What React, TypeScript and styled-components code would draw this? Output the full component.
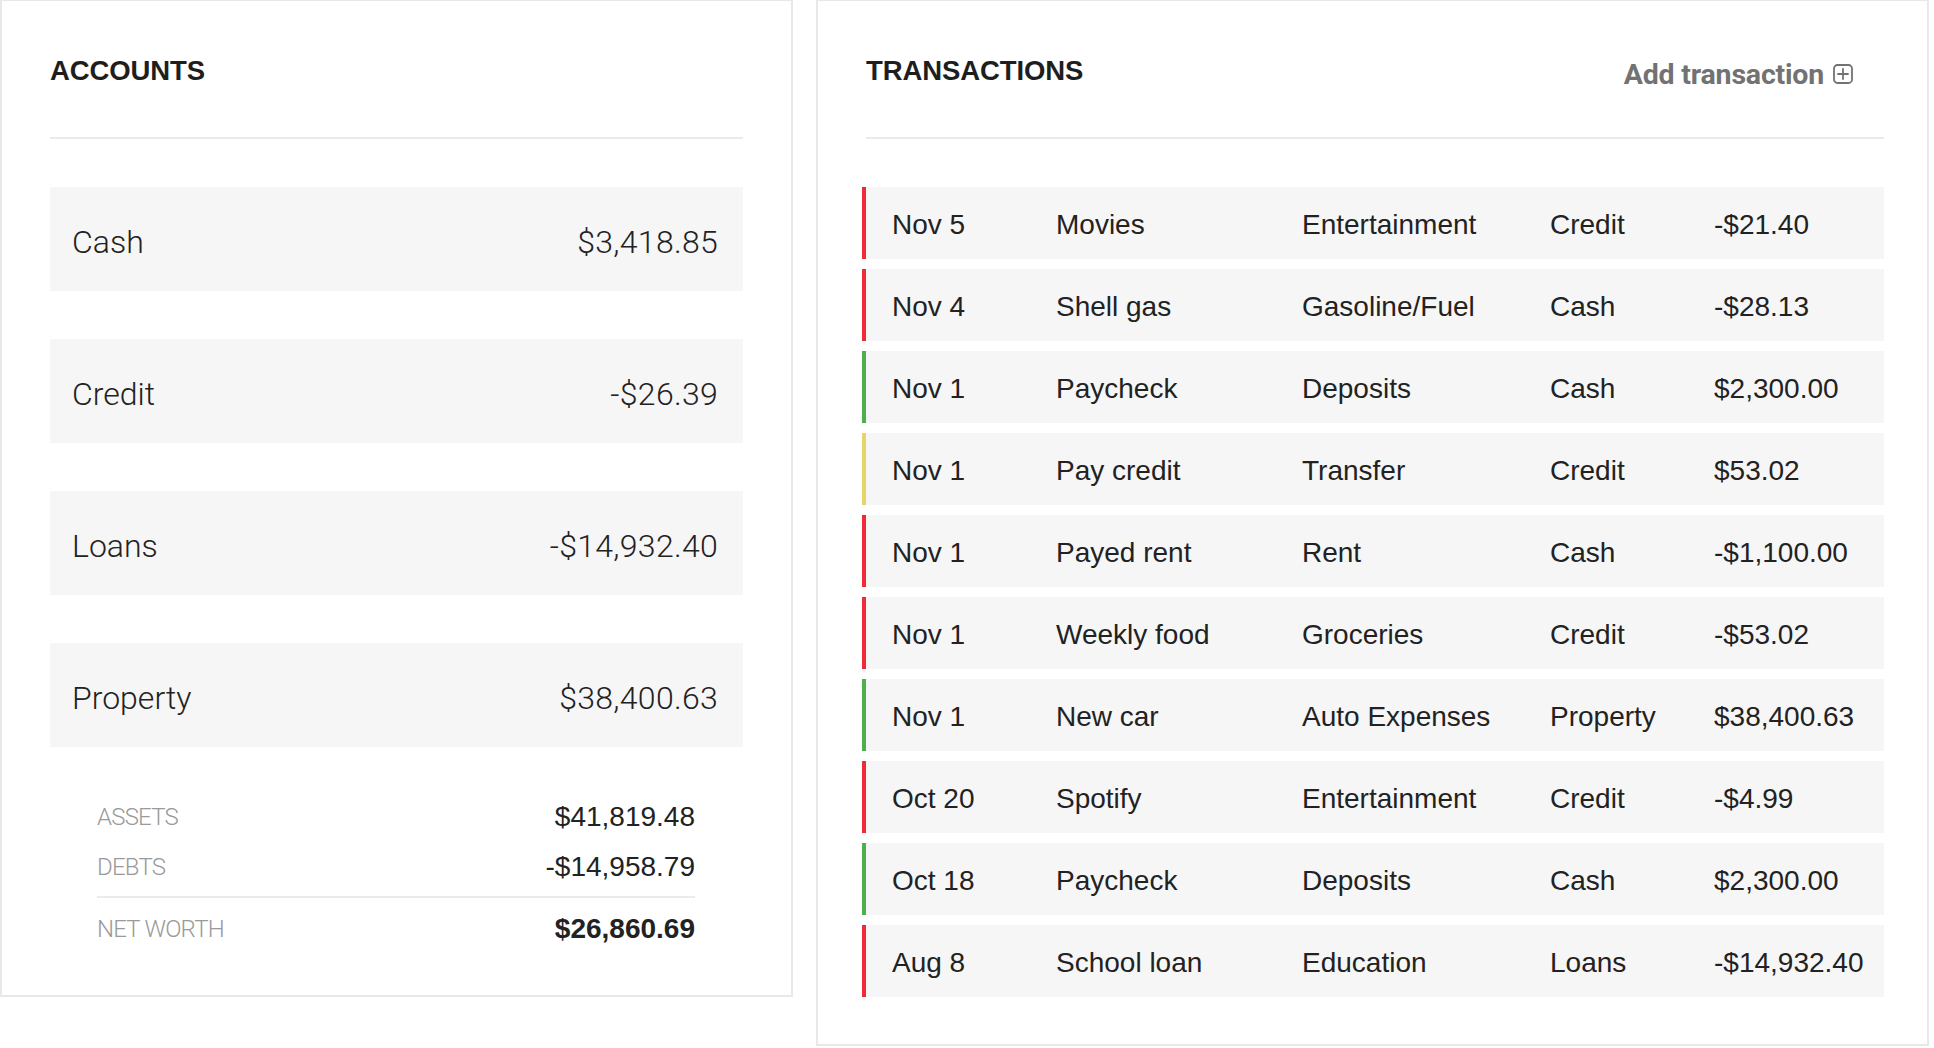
import React from "react";
import styled, { createGlobalStyle } from "styled-components";

const GlobalStyle = createGlobalStyle`
  html, body {
    margin: 0;
    padding: 0;
    background: #ffffff;
  }
  body {
    font-family: "Liberation Sans", Arial, sans-serif;
    color: #222222;
  }
  * { box-sizing: border-box; }
`;

const Page = styled.div`
  display: flex;
  align-items: flex-start;
  gap: 23px;
`;

const Card = styled.section<{ $width: number }>`
  width: ${(p) => p.$width}px;
  background: #ffffff;
  border: 2px solid #e8e8e8;
  border-top-width: 1.5px;
`;

const AccountsCard = styled(Card)`
  padding: 0 48px 42px 48px;
`;

const TransactionsCard = styled(Card)`
  padding: 0 43px 47px 48px;
`;

const Header = styled.header`
  height: 138px;
  display: flex;
  align-items: center;
  justify-content: space-between;
  padding-top: 4px;
  border-bottom: 2px solid #ebebeb;
`;

const Title = styled.h2`
  margin: 0;
  font-family: "Liberation Sans", Arial, sans-serif;
  font-weight: 700;
  font-size: 27.5px;
  letter-spacing: -0.1px;
  color: #1e1e1e;
`;

const AddButton = styled.button`
  display: flex;
  align-items: center;
  gap: 9px;
  margin: 6px 31px 0 0;
  padding: 0;
  border: none;
  background: none;
  cursor: pointer;
  font-family: Roboto, "Liberation Sans", sans-serif;
  font-weight: 700;
  font-size: 28.5px;
  letter-spacing: -0.2px;
  color: #727272;
`;

const AccountList = styled.div`
  display: flex;
  flex-direction: column;
  gap: 48px;
  margin-top: 48px;
`;

const AccountRow = styled.div`
  height: 104px;
  display: flex;
  align-items: center;
  justify-content: space-between;
  padding: 5px 25px 0 22px;
  background: #f6f6f6;
  font-family: Roboto, "Liberation Sans", sans-serif;
  font-weight: 300;
  font-size: 32px;
  color: #222222;
`;

const AccountValue = styled.span`
  letter-spacing: 0.3px;
`;

const Summary = styled.div`
  margin-top: 44px;
  padding: 0 48px 0 47px;
`;

const SummaryRow = styled.div<{ $strong?: boolean }>`
  height: 50px;
  display: flex;
  align-items: center;
  justify-content: space-between;
  padding-top: 2px;
  font-family: "Liberation Sans", Arial, sans-serif;
  font-size: 28px;
  font-weight: ${(p) => (p.$strong ? 700 : 400)};
  color: #222222;
`;

const SummaryLabel = styled.span`
  font-family: Roboto, "Liberation Sans", sans-serif;
  font-weight: 300;
  font-size: 24px;
  letter-spacing: -0.8px;
  color: #9a9a9a;
`;

const SummaryDivider = styled.hr`
  margin: 5px 0;
  border: none;
  border-top: 2px solid #ebebeb;
`;

const TxList = styled.div`
  display: flex;
  flex-direction: column;
  gap: 10px;
  margin: 48px 0 0 -4px;
`;

const TxRow = styled.div<{ $color: string }>`
  height: 72px;
  display: grid;
  grid-template-columns: 164px 246px 248px 164px 1fr;
  align-items: center;
  padding: 4px 0 0 26px;
  background: #f6f6f6;
  border-left: 4px solid ${(p) => p.$color};
  font-family: "Liberation Sans", Arial, sans-serif;
  font-size: 28px;
  color: #222222;
`;

const PlusIcon = () => (
  <svg width="20" height="20" viewBox="0 0 20 20" fill="none" stroke="#727272" strokeWidth="1.8">
    <rect x="1" y="1" width="18" height="18" rx="3.5" />
    <line x1="10" y1="5" x2="10" y2="15" strokeLinecap="round" />
    <line x1="5" y1="10" x2="15" y2="10" strokeLinecap="round" />
  </svg>
);

const RED = "#ef2b37";
const GREEN = "#4cb050";
const YELLOW = "#e8d468";

const accounts = [
  { name: "Cash", value: "$3,418.85" },
  { name: "Credit", value: "-$26.39" },
  { name: "Loans", value: "-$14,932.40" },
  { name: "Property", value: "$38,400.63" },
];

const transactions = [
  { date: "Nov 5", desc: "Movies", cat: "Entertainment", acct: "Credit", amount: "-$21.40", color: RED },
  { date: "Nov 4", desc: "Shell gas", cat: "Gasoline/Fuel", acct: "Cash", amount: "-$28.13", color: RED },
  { date: "Nov 1", desc: "Paycheck", cat: "Deposits", acct: "Cash", amount: "$2,300.00", color: GREEN },
  { date: "Nov 1", desc: "Pay credit", cat: "Transfer", acct: "Credit", amount: "$53.02", color: YELLOW },
  { date: "Nov 1", desc: "Payed rent", cat: "Rent", acct: "Cash", amount: "-$1,100.00", color: RED },
  { date: "Nov 1", desc: "Weekly food", cat: "Groceries", acct: "Credit", amount: "-$53.02", color: RED },
  { date: "Nov 1", desc: "New car", cat: "Auto Expenses", acct: "Property", amount: "$38,400.63", color: GREEN },
  { date: "Oct 20", desc: "Spotify", cat: "Entertainment", acct: "Credit", amount: "-$4.99", color: RED },
  { date: "Oct 18", desc: "Paycheck", cat: "Deposits", acct: "Cash", amount: "$2,300.00", color: GREEN },
  { date: "Aug 8", desc: "School loan", cat: "Education", acct: "Loans", amount: "-$14,932.40", color: RED },
];

export default function App() {
  return (
    <>
      <GlobalStyle />
      <Page>
        <AccountsCard $width={793}>
          <Header>
            <Title>ACCOUNTS</Title>
          </Header>
          <AccountList>
            {accounts.map((a) => (
              <AccountRow key={a.name}>
                <span>{a.name}</span>
                <AccountValue>{a.value}</AccountValue>
              </AccountRow>
            ))}
          </AccountList>
          <Summary>
            <SummaryRow>
              <SummaryLabel>ASSETS</SummaryLabel>
              <span>$41,819.48</span>
            </SummaryRow>
            <SummaryRow>
              <SummaryLabel>DEBTS</SummaryLabel>
              <span>-$14,958.79</span>
            </SummaryRow>
            <SummaryDivider />
            <SummaryRow $strong>
              <SummaryLabel>NET WORTH</SummaryLabel>
              <span>$26,860.69</span>
            </SummaryRow>
          </Summary>
        </AccountsCard>
        <TransactionsCard $width={1113}>
          <Header>
            <Title>TRANSACTIONS</Title>
            <AddButton>
              Add transaction
              <PlusIcon />
            </AddButton>
          </Header>
          <TxList>
            {transactions.map((t, i) => (
              <TxRow key={i} $color={t.color}>
                <span>{t.date}</span>
                <span>{t.desc}</span>
                <span>{t.cat}</span>
                <span>{t.acct}</span>
                <span>{t.amount}</span>
              </TxRow>
            ))}
          </TxList>
        </TransactionsCard>
      </Page>
    </>
  );
}
